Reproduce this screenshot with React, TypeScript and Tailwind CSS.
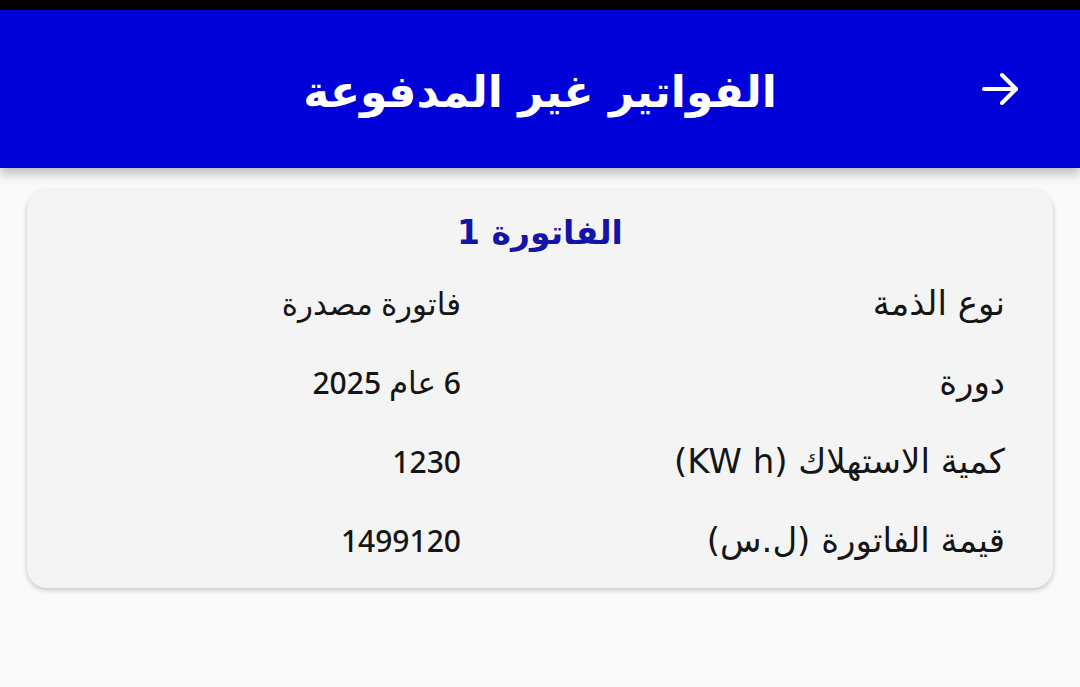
import React from "react";

const ar = "text-[31px] font-normal";

const rows: { label: string; value: React.ReactNode }[] = [
  { label: "نوع الذمة", value: <span className={ar}>فاتورة مصدرة</span> },
  { label: "دورة", value: <>6 <span className={ar}>عام</span> 2025</> },
  { label: "كمية الاستهلاك (KW h)", value: "1230" },
  { label: "قيمة الفاتورة (ل.س)", value: "1499120" },
];

export default function App() {
  return (
    <div
      dir="rtl"
      className="w-[1080px] h-[687px] bg-[#fafafa] overflow-hidden"
      style={{ fontFamily: '"DejaVu Sans", "Noto Sans", sans-serif' }}
    >
      {/* status bar */}
      <div className="h-[10px] bg-black" />

      {/* header */}
      <header className="relative h-[158px] bg-[#0000d8] flex items-center justify-center shadow-[0_6px_10px_rgba(0,0,0,0.25)]">
        <h1 className="text-white text-[44px] font-bold leading-none pt-[6px]">
          الفواتير غير المدفوعة
        </h1>
        <button className="absolute right-[56px] top-1/2 -translate-y-1/2 text-white">
          <svg width="48" height="48" viewBox="0 0 24 24" fill="none" stroke="currentColor" strokeWidth="2" strokeLinecap="round" strokeLinejoin="round">
            <path d="M4 12h16" />
            <path d="M13 5l7 7-7 7" />
          </svg>
        </button>
      </header>

      {/* card */}
      <div className="mx-[27px] mt-[22px] rounded-[20px] bg-[#f4f4f4] shadow-[0_2px_5px_rgba(0,0,0,0.22)] pt-[20px] pb-[30px] px-[48px]">
        <h2 className="text-center text-[#1414a8] text-[33px] font-bold leading-none h-[44px] flex items-center justify-center">
          الفاتورة 1
        </h2>
        <div className="mt-[32px] grid grid-cols-[544px_1fr] gap-y-[44px]">
          {rows.map((r) => (
            <React.Fragment key={r.label}>
              <div className="text-[#151515] text-[34px] leading-[35px] h-[35px] whitespace-nowrap">{r.label}</div>
              <div
                className="text-[#151515] text-[30px] font-medium leading-[35px] h-[35px] whitespace-nowrap"
                style={{ fontFamily: '"Noto Sans", "DejaVu Sans", sans-serif' }}
              >
                {r.value}
              </div>
            </React.Fragment>
          ))}
        </div>
      </div>
    </div>
  );
}
